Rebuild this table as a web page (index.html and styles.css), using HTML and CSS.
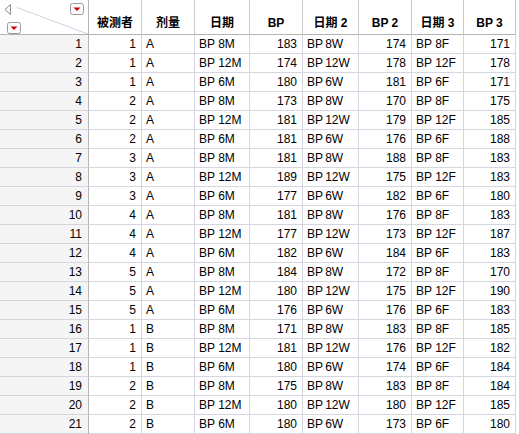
FILE: index.html
```html
<!DOCTYPE html>
<html lang="zh">
<head>
<meta charset="utf-8">
<title>数据表</title>
<link rel="stylesheet" href="styles.css">
</head>
<body>
<div class="grid">
  <div class="corner">
    <svg class="corner-art" width="88" height="34" viewBox="0 0 88 34">
      <line x1="17" y1="7.5" x2="88" y2="34" stroke="#cfd0e0" stroke-width="1"/>
      <path d="M10.5 4.5 L5 9.5 L10.5 14.5 Z" fill="none" stroke="#8a8a8a" stroke-width="1"/>
      <rect x="70.5" y="3.5" width="13" height="11" rx="2" fill="#fbfbfb" stroke="#9a9a9a"/>
      <path d="M73.5 7.5 L80.5 7.5 L77 11 Z" fill="#d00000"/>
      <rect x="7.5" y="22.5" width="13" height="11" rx="2" fill="#fbfbfb" stroke="#9a9a9a"/>
      <path d="M10.5 26.5 L17.5 26.5 L14 30 Z" fill="#d00000"/>
    </svg>
  </div>
  <div class="h">被测者</div>
  <div class="h">剂量</div>
  <div class="h">日期</div>
  <div class="h">BP</div>
  <div class="h">日期 2</div>
  <div class="h">BP 2</div>
  <div class="h">日期 3</div>
  <div class="h">BP 3</div>

  <div class="rl">1</div><div class="n">1</div><div class="t">A</div><div class="t">BP 8M</div><div class="n">183</div><div class="t w">BP 8W</div><div class="n">174</div><div class="t">BP 8F</div><div class="n">171</div>
  <div class="rl">2</div><div class="n">1</div><div class="t">A</div><div class="t">BP 12M</div><div class="n">174</div><div class="t w">BP 12W</div><div class="n">178</div><div class="t">BP 12F</div><div class="n">178</div>
  <div class="rl">3</div><div class="n">1</div><div class="t">A</div><div class="t">BP 6M</div><div class="n">180</div><div class="t w">BP 6W</div><div class="n">181</div><div class="t">BP 6F</div><div class="n">171</div>
  <div class="rl">4</div><div class="n">2</div><div class="t">A</div><div class="t">BP 8M</div><div class="n">173</div><div class="t w">BP 8W</div><div class="n">170</div><div class="t">BP 8F</div><div class="n">175</div>
  <div class="rl">5</div><div class="n">2</div><div class="t">A</div><div class="t">BP 12M</div><div class="n">181</div><div class="t w">BP 12W</div><div class="n">179</div><div class="t">BP 12F</div><div class="n">185</div>
  <div class="rl">6</div><div class="n">2</div><div class="t">A</div><div class="t">BP 6M</div><div class="n">181</div><div class="t w">BP 6W</div><div class="n">176</div><div class="t">BP 6F</div><div class="n">188</div>
  <div class="rl">7</div><div class="n">3</div><div class="t">A</div><div class="t">BP 8M</div><div class="n">181</div><div class="t w">BP 8W</div><div class="n">188</div><div class="t">BP 8F</div><div class="n">183</div>
  <div class="rl">8</div><div class="n">3</div><div class="t">A</div><div class="t">BP 12M</div><div class="n">189</div><div class="t w">BP 12W</div><div class="n">175</div><div class="t">BP 12F</div><div class="n">183</div>
  <div class="rl">9</div><div class="n">3</div><div class="t">A</div><div class="t">BP 6M</div><div class="n">177</div><div class="t w">BP 6W</div><div class="n">182</div><div class="t">BP 6F</div><div class="n">180</div>
  <div class="rl">10</div><div class="n">4</div><div class="t">A</div><div class="t">BP 8M</div><div class="n">181</div><div class="t w">BP 8W</div><div class="n">176</div><div class="t">BP 8F</div><div class="n">183</div>
  <div class="rl">11</div><div class="n">4</div><div class="t">A</div><div class="t">BP 12M</div><div class="n">177</div><div class="t w">BP 12W</div><div class="n">173</div><div class="t">BP 12F</div><div class="n">187</div>
  <div class="rl">12</div><div class="n">4</div><div class="t">A</div><div class="t">BP 6M</div><div class="n">182</div><div class="t w">BP 6W</div><div class="n">184</div><div class="t">BP 6F</div><div class="n">183</div>
  <div class="rl">13</div><div class="n">5</div><div class="t">A</div><div class="t">BP 8M</div><div class="n">184</div><div class="t w">BP 8W</div><div class="n">172</div><div class="t">BP 8F</div><div class="n">170</div>
  <div class="rl">14</div><div class="n">5</div><div class="t">A</div><div class="t">BP 12M</div><div class="n">180</div><div class="t w">BP 12W</div><div class="n">175</div><div class="t">BP 12F</div><div class="n">190</div>
  <div class="rl">15</div><div class="n">5</div><div class="t">A</div><div class="t">BP 6M</div><div class="n">176</div><div class="t w">BP 6W</div><div class="n">176</div><div class="t">BP 6F</div><div class="n">183</div>
  <div class="rl">16</div><div class="n">1</div><div class="t">B</div><div class="t">BP 8M</div><div class="n">171</div><div class="t w">BP 8W</div><div class="n">183</div><div class="t">BP 8F</div><div class="n">185</div>
  <div class="rl">17</div><div class="n">1</div><div class="t">B</div><div class="t">BP 12M</div><div class="n">181</div><div class="t w">BP 12W</div><div class="n">176</div><div class="t">BP 12F</div><div class="n">182</div>
  <div class="rl">18</div><div class="n">1</div><div class="t">B</div><div class="t">BP 6M</div><div class="n">180</div><div class="t w">BP 6W</div><div class="n">174</div><div class="t">BP 6F</div><div class="n">184</div>
  <div class="rl">19</div><div class="n">2</div><div class="t">B</div><div class="t">BP 8M</div><div class="n">175</div><div class="t w">BP 8W</div><div class="n">183</div><div class="t">BP 8F</div><div class="n">184</div>
  <div class="rl">20</div><div class="n">2</div><div class="t">B</div><div class="t">BP 12M</div><div class="n">180</div><div class="t w">BP 12W</div><div class="n">180</div><div class="t">BP 12F</div><div class="n">185</div>
  <div class="rl">21</div><div class="n">2</div><div class="t">B</div><div class="t">BP 6M</div><div class="n">180</div><div class="t w">BP 6W</div><div class="n">173</div><div class="t">BP 6F</div><div class="n">180</div>
</div>
</body>
</html>
```
FILE: styles.css
```css
html, body {
  margin: 0;
  padding: 0;
  background: #ffffff;
}

.grid {
  display: grid;
  grid-template-columns: 89px 53px 53px 55px 53px 56px 53px 52px 52px;
  grid-template-rows: 35px;
  grid-auto-rows: 19px;
  font-family: "Liberation Sans", "Noto Sans CJK SC", sans-serif;
  font-size: 12px;
  color: #000;
  width: 516px;
}

.grid > div {
  box-sizing: border-box;
  border-right: 1px solid #d6d6e0;
  border-bottom: 1px solid #d6d6e0;
  white-space: nowrap;
  overflow: hidden;
}

.corner {
  background: #fff;
  position: relative;
}

.grid > .corner {
  border-right: 1px solid #b4b4b4;
  border-bottom: 1px solid #b4b4b4;
}

.corner-art {
  display: block;
}

.grid > .h {
  display: flex;
  align-items: flex-end;
  justify-content: center;
  padding-bottom: 3px;
  font-weight: 700;
  font-family: "Liberation Sans", "Noto Sans CJK SC", sans-serif;
  background: #fff;
  border-right: 1px solid #c8c8c8;
  border-bottom: 1px solid #b4b4b4;
  line-height: 16px;
}

.grid > .rl {
  background: #f5f5f5;
  text-align: right;
  padding-right: 6px;
  line-height: 18px;
  border-right: 1px solid #b4b4b4;
}

.n {
  text-align: right;
  padding-right: 5px;
  line-height: 18px;
}

.t {
  text-align: left;
  padding-left: 4px;
  line-height: 18px;
}

.w {
  word-spacing: -1px;
}
```
